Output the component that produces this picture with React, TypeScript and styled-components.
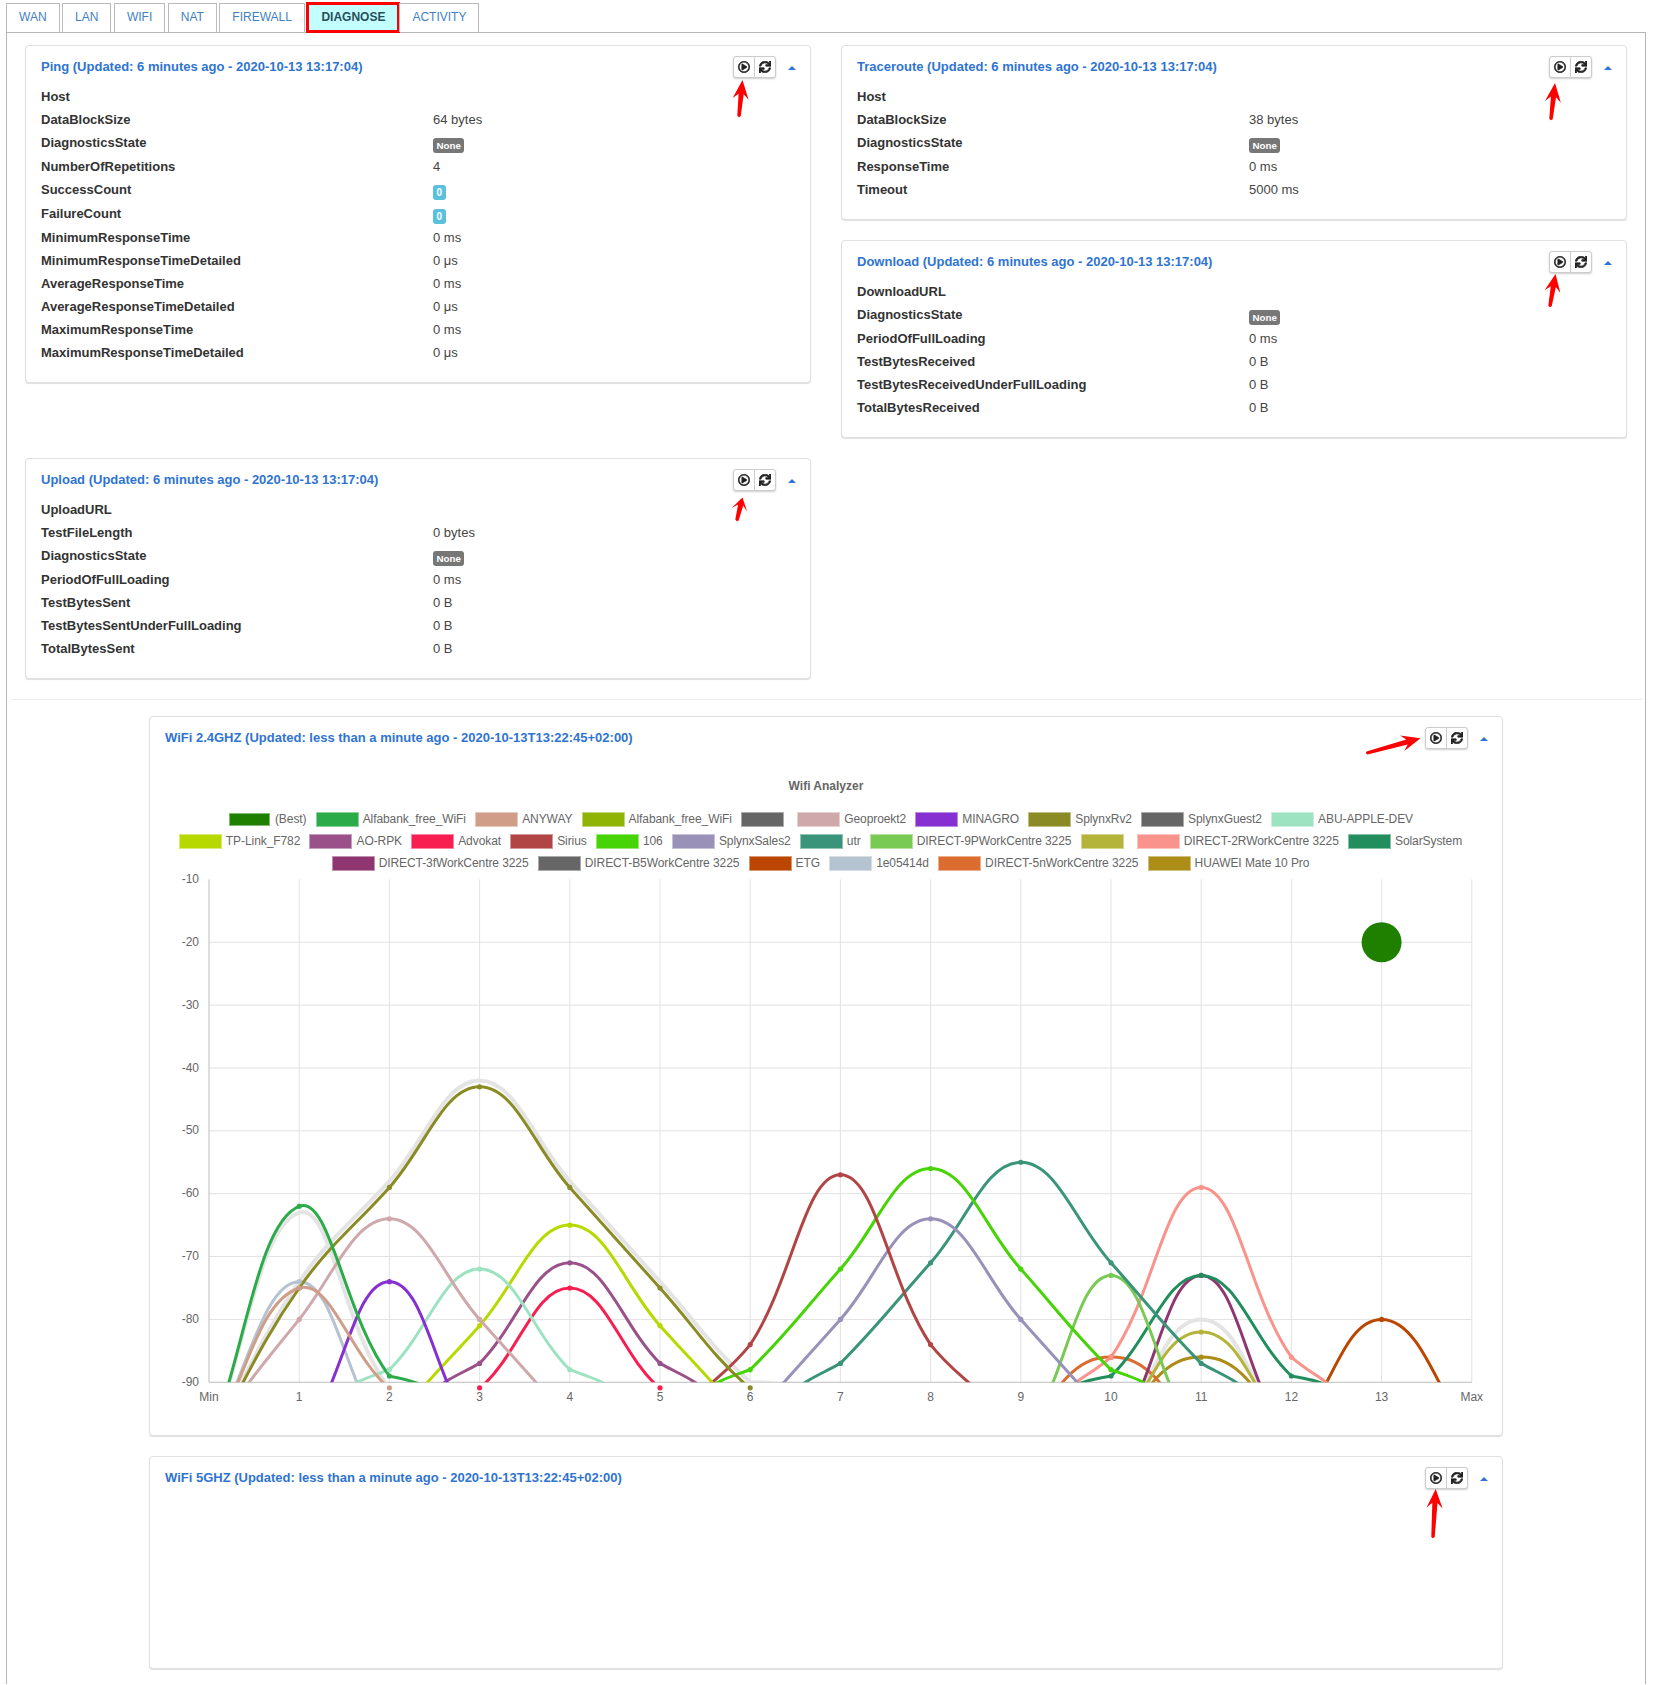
import React from "react";
import styled, { createGlobalStyle } from "styled-components";
import { FaRegPlayCircle, FaSync } from "react-icons/fa";

const Global = createGlobalStyle`
  html, body { margin: 0; padding: 0; background: #fff; }
  body { font-family: "Liberation Sans", Arial, sans-serif; font-size: 13px; color: #333; }
`;

const Page = styled.div`
  padding: 3px 11px 0 6px;
`;
const TabBar = styled.div`
  display: flex;
  gap: 2.5px;
  height: 29px;
`;
const Tab = styled.div<{ $active?: boolean }>`
  box-sizing: border-box;
  padding: 0 ${(p) => (p.$active ? 13 : 12)}px;
  margin-right: ${(p) => (p.$active ? -2.5 : 0)}px;
  position: relative;
  line-height: 27px;
  height: 29px;
  font-size: 12px;
  font-weight: ${(p) => (p.$active ? 700 : 400)};
  color: ${(p) => (p.$active ? "#274f5a" : "#3f7fc4")};
  background: ${(p) => (p.$active ? "#c4ffff" : "#fff")};
  border: 1px solid #bbb;
  border-bottom: 0;
  outline: ${(p) => (p.$active ? "3.5px solid #f00" : "none")};
  outline-offset: -2.5px;
`;
const Frame = styled.div`
  border: 1px solid #b5b5b5;
  border-bottom: 0;
  padding: 12px 18px 15px 18px;
`;
const TopGrid = styled.div`
  display: grid;
  grid-template-columns: 786px 786px;
  column-gap: 30px;
  row-gap: 20px;
  align-items: start;
`;
const Stack = styled.div`
  display: flex;
  flex-direction: column;
  gap: 20px;
`;
const Rule = styled.hr`
  border: 0;
  border-top: 1px solid #eee;
  margin: 20px -16px 16px -14px;
`;
const Panel = styled.section<{ $chart?: boolean; $height?: number; $last?: boolean }>`
  position: relative;
  box-sizing: border-box;
  background: #fff;
  border: 1px solid #e0e0e0;
  border-radius: 4px;
  box-shadow: 0 1px 1px rgba(0, 0, 0, 0.13);
  padding: 0 0 18px;
  ${(p) => (p.$height ? `height: ${p.$height}px;` : "")}
  ${(p) => (p.$chart ? `width: 1354px; padding-bottom: 25px; margin: 0 0 ${p.$last ? 0 : 20}px 124px;` : "")}
`;
const Header = styled.header`
  display: flex;
  align-items: flex-start;
  height: 39px;
  box-sizing: border-box;
  padding: 10px 14px 0 15px;
`;
const Title = styled.h3`
  flex: 1;
  margin: 0;
  font-size: 13px;
  line-height: 21px;
  font-weight: 700;
  color: #2f74d0;
`;
const BtnGroup = styled.div`
  display: flex;
  box-sizing: border-box;
  height: 22px;
  border: 1px solid #ccc;
  border-radius: 3px;
  box-shadow: 0 1px 2px rgba(0, 0, 0, 0.2);
  background: #fff;
`;
const Btn = styled.span`
  display: flex;
  align-items: center;
  justify-content: center;
  width: 20px;
  color: #222;
  & + & { border-left: 1px solid #ccc; }
`;
const Caret = styled.span`
  width: 0;
  height: 0;
  margin: 10px 0 0 12px;
  border-left: 4px solid transparent;
  border-right: 4px solid transparent;
  border-bottom: 4px solid #2f74d0;
`;
const Rows = styled.div`
  display: grid;
  grid-template-columns: 392px 1fr;
  padding: 0 15px;
  line-height: 23px;
`;
const Key = styled.div`
  font-weight: 700;
  color: #333;
`;
const Val = styled.div`
  color: #444;
  min-height: 23px;
`;
const Badge = styled.span<{ $info?: boolean }>`
  display: block;
  width: fit-content;
  box-sizing: border-box;
  margin: 7px 0 2px;
  height: 15px;
  padding: 0 3.5px;
  border-radius: 3px;
  background: ${(p) => (p.$info ? "#5bc0de" : "#777")};
  color: #fff;
  font-size: ${(p) => (p.$info ? 10 : 9.75)}px;
  font-weight: 700;
  line-height: 15px;
`;
const ChartTitle = styled.div`
  margin-top: 19px;
  margin-bottom: 11px;
  height: 22px;
  line-height: 22px;
  text-align: center;
  font-size: 12px;
  font-weight: 700;
  color: #666;
`;
const LegendRow = styled.div`
  display: flex;
  justify-content: center;
  height: 22px;
  align-items: center;
  padding-right: 11px;
`;
const LegendItem = styled.span`
  display: flex;
  align-items: center;
  gap: 4px;
  margin: 0 4.6px;
  font-size: 12px;
  letter-spacing: -0.08px;
  color: #666;
  white-space: pre;
`;
const Swatch = styled.i<{ $color: string; $best?: boolean; $blank?: boolean }>`
  display: block;
  box-sizing: border-box;
  width: ${(p) => (p.$best ? 41 : 43)}px;
  height: ${(p) => (p.$best ? 13 : 15)}px;
  margin: 0 ${(p) => (p.$best ? 1 : p.$blank ? 4 : 0)}px 0 ${(p) => (p.$best ? 1 : 0)}px;
  background: ${(p) => p.$color};
  border: 1px solid rgba(255, 255, 255, 0.45);
`;
const Plot = styled.svg`
  display: block;
  margin-top: -10px;
  font-family: "Liberation Sans", Arial, sans-serif;
  font-size: 12px;
`;
const ArrowMark = styled.svg<{ $left: number; $top: number }>`
  position: absolute;
  left: ${(p) => p.$left}px;
  top: ${(p) => p.$top}px;
  overflow: visible;
  pointer-events: none;
`;

type Pt = [number, number];

function Arrow({ tip, tail }: { tip: Pt; tail: Pt }) {
  const dx = tip[0] - tail[0];
  const dy = tip[1] - tail[1];
  const L = Math.hypot(dx, dy);
  const ux = dx / L, uy = dy / L;
  const nx = -uy, ny = ux;
  const head = Math.min(19, L * 0.55);
  const at = (a: number, b: number) => `${(a * ux + b * nx).toFixed(1)},${(a * uy + b * ny).toFixed(1)}`;
  const pts = [
    at(L, 0),
    at(L - head, 8),
    at(L - head + 5, 2.6),
    at(0, 1.7),
    at(-1.2, 0),
    at(0, -1.7),
    at(L - head + 5, -2.6),
    at(L - head, -8),
  ].join(" ");
  return (
    <ArrowMark $left={tail[0]} $top={tail[1]} width={1} height={1}>
      <polygon points={pts} fill="#f00" />
    </ArrowMark>
  );
}

function Head({ title }: { title: string }) {
  return (
    <Header>
      <Title>{title}</Title>
      <BtnGroup>
        <Btn><FaRegPlayCircle size={12} stroke="currentColor" strokeWidth={22} /></Btn>
        <Btn><FaSync size={12} stroke="currentColor" strokeWidth={28} /></Btn>
      </BtnGroup>
      <Caret />
    </Header>
  );
}

type RowT = [string, string?, ("none" | "info")?];
function InfoRows({ rows }: { rows: RowT[] }) {
  return (
    <Rows>
      {rows.map(([k, v, b]) => (
        <React.Fragment key={k}>
          <Key>{k}</Key>
          <Val>{b ? <Badge $info={b === "info"}>{v}</Badge> : v}</Val>
        </React.Fragment>
      ))}
    </Rows>
  );
}

const ping: RowT[] = [
  ["Host"], ["DataBlockSize", "64 bytes"], ["DiagnosticsState", "None", "none"], ["NumberOfRepetitions", "4"],
  ["SuccessCount", "0", "info"], ["FailureCount", "0", "info"], ["MinimumResponseTime", "0 ms"],
  ["MinimumResponseTimeDetailed", "0 μs"], ["AverageResponseTime", "0 ms"], ["AverageResponseTimeDetailed", "0 μs"],
  ["MaximumResponseTime", "0 ms"], ["MaximumResponseTimeDetailed", "0 μs"],
];
const trace: RowT[] = [
  ["Host"], ["DataBlockSize", "38 bytes"], ["DiagnosticsState", "None", "none"], ["ResponseTime", "0 ms"], ["Timeout", "5000 ms"],
];
const download: RowT[] = [
  ["DownloadURL"], ["DiagnosticsState", "None", "none"], ["PeriodOfFullLoading", "0 ms"], ["TestBytesReceived", "0 B"],
  ["TestBytesReceivedUnderFullLoading", "0 B"], ["TotalBytesReceived", "0 B"],
];
const upload: RowT[] = [
  ["UploadURL"], ["TestFileLength", "0 bytes"], ["DiagnosticsState", "None", "none"], ["PeriodOfFullLoading", "0 ms"],
  ["TestBytesSent", "0 B"], ["TestBytesSentUnderFullLoading", "0 B"], ["TotalBytesSent", "0 B"],
];

const legend: [string, string][][] = [
  [["(Best)", "#1f8000"], ["Alfabank_free_WiFi", "#2bab49"], ["ANYWAY", "#d09d88"], ["Alfabank_free_WiFi", "#8fb404"], ["", "#666666"], ["Geoproekt2", "#cfa8ac"], ["MINAGRO", "#8730d1"], ["SplynxRv2", "#8b8b26"], ["SplynxGuest2", "#666666"], ["ABU-APPLE-DEV", "#9de3c1"]],
  [["TP-Link_F782", "#b8d900"], ["AO-RPK", "#9a5089"], ["Advokat", "#f81e50"], ["Sirius", "#b14545"], ["106", "#47d406"], ["SplynxSales2", "#9a91b9"], ["utr", "#3a9479"], ["DIRECT-9PWorkCentre 3225", "#78ca54"], ["", "#b4b43a"], ["DIRECT-2RWorkCentre 3225", "#f9938b"], ["SolarSystem", "#238e5d"]],
  [["DIRECT-3fWorkCentre 3225", "#8f3570"], ["DIRECT-B5WorkCentre 3225", "#666666"], ["ETG", "#bb4600"], ["1e05414d", "#b5c2cf"], ["DIRECT-5nWorkCentre 3225", "#db6d30"], ["HUAWEI Mate 10 Pro", "#ac8d18"]],
];

type Series = { color: string; width?: number; dots?: boolean; start: number; values: number[] };
const ghost = "#e4e4e4";
// painted in this order, later ones on top
const series: Series[] = [
  { color: ghost, width: 4, dots: false, start: 0, values: [-100, -63, -91, -100] },
  { color: ghost, width: 4, dots: false, start: 0, values: [-100, -74, -58, -42, -58, -74, -90, -100] },
  { color: ghost, width: 4, dots: false, start: 9, values: [-110, -100, -80, -100, -110] },
  { color: "#ac8d18", start: 9, values: [-110, -100, -86, -100, -110] },
  { color: "#db6d30", start: 8, values: [-110, -100, -86, -100, -110] },
  { color: "#b5c2cf", start: 0, values: [-100, -74, -100, -110] },
  { color: "#bb4600", start: 11, values: [-110, -100, -80, -100] },
  { color: "#8f3570", start: 9, values: [-110, -100, -73, -100, -110] },
  { color: "#238e5d", start: 8, values: [-105, -100, -89, -73, -89, -100, -105] },
  { color: "#f9938b", start: 8, values: [-110, -100, -86, -59, -86, -100, -110] },
  { color: "#b4b43a", start: 9, values: [-110, -100, -82, -100, -110] },
  { color: "#78ca54", start: 8, values: [-110, -100, -73, -100, -110] },
  { color: "#3a9479", start: 5, values: [-105, -100, -87, -71, -55, -71, -87, -100, -105] },
  { color: "#9a91b9", start: 5, values: [-112, -96, -80, -64, -80, -96, -112] },
  { color: "#47d406", start: 4, values: [-105, -100, -88, -72, -56, -72, -88, -100, -105] },
  { color: "#b14545", start: 4, values: [-110, -100, -84, -57, -84, -100, -110] },
  { color: "#f81e50", start: 1, values: [-110, -100, -91, -75, -91, -100, -110] },
  { color: "#9a5089", start: 1, values: [-105, -100, -87, -71, -87, -100, -105] },
  { color: "#b8d900", start: 1, values: [-113, -97, -81, -65, -81, -97, -113] },
  { color: "#9de3c1", start: 0, values: [-100, -100, -88, -72, -88, -100, -100] },
  { color: "#8b8b26", start: 0, values: [-100, -75, -59, -43, -59, -75, -91, -100] },
  { color: "#8730d1", start: 0, values: [-110, -100, -74, -100, -110] },
  { color: "#cfa8ac", start: 0, values: [-100, -80, -64, -80, -96, -112] },
  { color: "#d09d88", start: 0, values: [-100, -75, -91, -100] },
  { color: "#2bab49", start: 0, values: [-100, -62, -89, -100, -100] },
];

const PX = (c: number) => 59 + 90.2 * c;
const PY = (v: number) => 15.4 + (-10 - v) * 6.286;
const BOTTOM = PY(-90);
const RIGHT = PX(14);

// the chart library's spline, with control points capped to the plot area
function curve(points: Pt[]) {
  const t = 0.4;
  const cap = (p: Pt): Pt => [p[0], Math.min(p[1], BOTTOM)];
  const cps = points.map((p, i) => {
    const a = points[i - 1] ?? p;
    const b = points[i + 1] ?? p;
    const d01 = Math.hypot(p[0] - a[0], p[1] - a[1]);
    const d12 = Math.hypot(b[0] - p[0], b[1] - p[1]);
    const sum = d01 + d12 || 1;
    const fa = (t * d01) / sum;
    const fb = (t * d12) / sum;
    return {
      prev: cap([p[0] - fa * (b[0] - a[0]), p[1] - fa * (b[1] - a[1])]),
      next: cap([p[0] + fb * (b[0] - a[0]), p[1] + fb * (b[1] - a[1])]),
    };
  });
  let d = `M${points[0][0]} ${points[0][1]}`;
  for (let i = 1; i < points.length; i++) {
    const c1 = cps[i - 1].next;
    const c2 = cps[i].prev;
    d += ` C${c1[0].toFixed(1)} ${c1[1].toFixed(1)} ${c2[0].toFixed(1)} ${c2[1].toFixed(1)} ${points[i][0].toFixed(1)} ${points[i][1].toFixed(1)}`;
  }
  return d;
}

function Chart() {
  const channels = Array.from({ length: 15 }, (_, i) => i);
  const dbs = [-10, -20, -30, -40, -50, -60, -70, -80, -90];
  return (
    <Plot width={1352} height={546} viewBox="0 0 1352 546">
      <defs>
        <clipPath id="plot-area">
          <rect x={PX(0)} y={0} width={RIGHT - PX(0)} height={BOTTOM} />
        </clipPath>
      </defs>
      {dbs.slice(1, 8).map((v) => (
        <line key={v} x1={PX(0)} x2={RIGHT} y1={PY(v)} y2={PY(v)} stroke="#e2e2e2" />
      ))}
      {channels.slice(1).map((c) => (
        <line key={c} x1={PX(c)} x2={PX(c)} y1={PY(-10)} y2={BOTTOM} stroke="#e2e2e2" />
      ))}
      <line x1={PX(0)} x2={PX(0)} y1={PY(-10)} y2={BOTTOM} stroke="#bdbdbd" />
      <line x1={PX(0)} x2={RIGHT} y1={BOTTOM} y2={BOTTOM} stroke="#bdbdbd" />
      {dbs.map((v) => (
        <text key={v} x={49} y={PY(v) + 3.6} textAnchor="end" fill="#666">{v}</text>
      ))}
      {channels.map((c) => (
        <text key={c} x={PX(c)} y={537} textAnchor="middle" fill="#666">
          {c === 0 ? "Min" : c === 14 ? "Max" : c}
        </text>
      ))}
      <g clipPath="url(#plot-area)" fill="none" strokeLinejoin="round">
        {series.map((s, i) => (
          <path
            key={i}
            d={curve(s.values.map((v, j) => [PX(s.start + j), PY(v)] as Pt))}
            stroke={s.color}
            strokeWidth={s.width ?? 3}
          />
        ))}
      </g>
      {series.filter((s) => s.dots !== false).map((s, i) =>
        s.values.map((v, j) =>
          v >= -91 ? <circle key={`${i}-${j}`} cx={PX(s.start + j)} cy={v === -91 ? BOTTOM + 5.5 : PY(v)} r={2.6} fill={s.color} /> : null
        )
      )}
      <circle cx={PX(13)} cy={PY(-20)} r={20} fill="#1f8000" />
    </Plot>
  );
}

export default function App() {
  return (
    <Page>
      <Global />
      <TabBar>
        {["WAN", "LAN", "WIFI", "NAT", "FIREWALL", "DIAGNOSE", "ACTIVITY"].map((t) => (
          <Tab key={t} $active={t === "DIAGNOSE"}>{t}</Tab>
        ))}
      </TabBar>
      <Frame>
        <TopGrid>
          <Panel>
            <Head title="Ping (Updated: 6 minutes ago - 2020-10-13 13:17:04)" />
            <InfoRows rows={ping} />
            <Arrow tip={[716, 34]} tail={[712.5, 70]} />
          </Panel>
          <Stack>
            <Panel>
              <Head title="Traceroute (Updated: 6 minutes ago - 2020-10-13 13:17:04)" />
              <InfoRows rows={trace} />
              <Arrow tip={[713, 37]} tail={[709, 73]} />
            </Panel>
            <Panel>
              <Head title="Download (Updated: 6 minutes ago - 2020-10-13 13:17:04)" />
              <InfoRows rows={download} />
              <Arrow tip={[713, 33]} tail={[707.5, 65]} />
            </Panel>
          </Stack>
          <Panel>
            <Head title="Upload (Updated: 6 minutes ago - 2020-10-13 13:17:04)" />
            <InfoRows rows={upload} />
            <Arrow tip={[716.5, 38.5]} tail={[711, 61]} />
          </Panel>
        </TopGrid>
        <Rule />
        <Panel $chart>
          <Head title="WiFi 2.4GHZ (Updated: less than a minute ago - 2020-10-13T13:22:45+02:00)" />
          <ChartTitle>Wifi Analyzer</ChartTitle>
          {legend.map((row, i) => (
            <LegendRow key={i}>
              {row.map(([label, color], j) => (
                <LegendItem key={j}>
                  <Swatch $color={color} $best={label === "(Best)"} $blank={label === ""} />
                  {label}
                </LegendItem>
              ))}
            </LegendRow>
          ))}
          <Chart />
          <Arrow tip={[1270.5, 21]} tail={[1217, 35.7]} />
        </Panel>
        <Panel $chart $last $height={213}>
          <Head title="WiFi 5GHZ (Updated: less than a minute ago - 2020-10-13T13:22:45+02:00)" />
          <Arrow tip={[1286, 32]} tail={[1283.3, 80]} />
        </Panel>
      </Frame>
    </Page>
  );
}
